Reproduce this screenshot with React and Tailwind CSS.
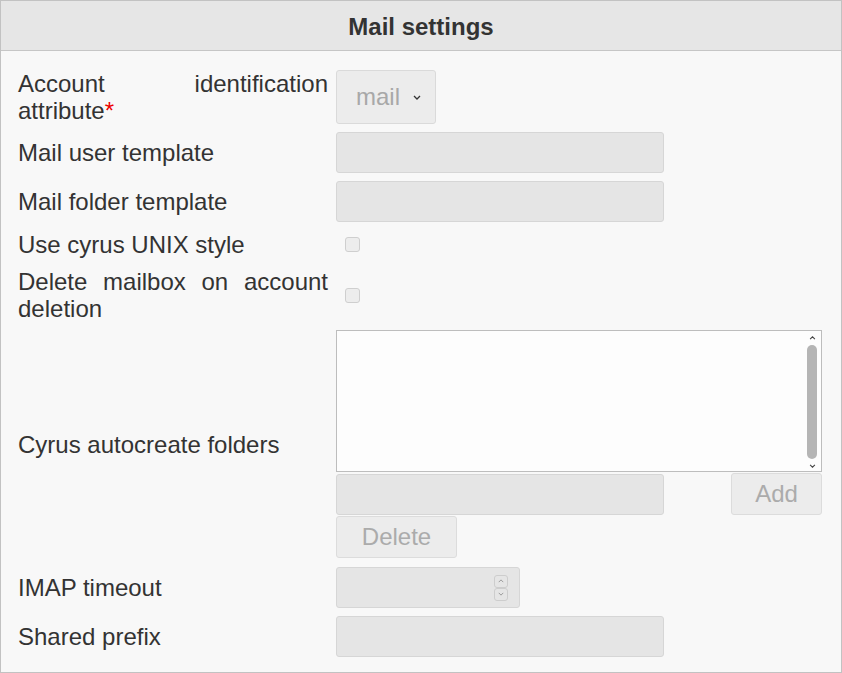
import React from "react";

const font = { fontFamily: '"Liberation Sans", Arial, sans-serif' };

function Label({ children, justify }) {
  return (
    <div
      className={
        "w-[310px] shrink-0 text-[24px] leading-[27px] text-[#333] " +
        (justify ? "text-justify" : "")
      }
    >
      {children}
    </div>
  );
}

function Input({ w = "w-[328px]" }) {
  return (
    <div className={`${w} h-[41px] rounded-[3px] border border-[#d6d6d6] bg-[#e5e5e5]`} />
  );
}

function Checkbox() {
  return (
    <div className="ml-[9px] h-[15px] w-[15px] rounded-[3px] border border-[#cfcfcf] bg-[#ededed]" />
  );
}

function Chevron({ up, className }) {
  return (
    <svg viewBox="0 0 8 5" className={className} fill="none" stroke="currentColor" strokeWidth="1.3">
      {up ? <path d="M1 4 L4 1 L7 4" /> : <path d="M1 1 L4 4 L7 1" />}
    </svg>
  );
}

function Row({ children, className = "" }) {
  return <div className={"flex items-center gap-2 " + className}>{children}</div>;
}

export default function App() {
  return (
    <div style={font} className="w-[842px] h-[673px] border border-[#c2c2c2] bg-[#f8f8f8]">
      <div className="h-[50px] border-b border-[#c6c6c6] bg-[#e6e6e6] flex items-center justify-center">
        <h2 className="text-[24px] leading-[27px] font-bold text-[#333] mt-px">Mail settings</h2>
      </div>
      <div className="pt-[19px] pl-[17px] pr-[18px] flex flex-col gap-2">
        <Row>
          <Label justify>
            Account identification attribute<span className="text-[#e00]">*</span>
          </Label>
          <div className="w-[100px] h-[54px] rounded-[3px] border border-[#dadada] bg-[#ececec] flex items-center pl-[19px] gap-[13px]">
            <span className="text-[24px] text-[#a8a8a8]">mail</span>
            <Chevron className="w-[8px] h-[5px] text-[#333]" />
          </div>
        </Row>
        <Row>
          <Label>Mail user template</Label>
          <Input />
        </Row>
        <Row>
          <Label>Mail folder template</Label>
          <Input />
        </Row>
        <Row className="mt-[1px]">
          <Label>Use cyrus UNIX style</Label>
          <Checkbox />
        </Row>
        <Row className="mt-[2px]">
          <Label justify>Delete mailbox on account deletion</Label>
          <Checkbox />
        </Row>
        <Row>
          <Label>Cyrus autocreate folders</Label>
          <div className="flex flex-col w-[486px]">
            <div className="h-[142px] border border-[#bdbdbd] bg-[#fdfdfd] flex justify-end">
              <div className="w-[18px] flex flex-col items-center pt-[5px] pb-[3px]">
                <Chevron up className="w-[7px] h-[4px] text-[#444]" />
                <div className="mt-[5px] w-[10px] flex-1 rounded-full bg-[#b5b5b5]" />
                <Chevron className="mt-[5px] w-[7px] h-[4px] text-[#444]" />
              </div>
            </div>
            <div className="mt-px flex justify-between items-start">
              <div className="mt-px">
                <Input />
              </div>
              <button className="w-[91px] h-[42px] rounded-[3px] border border-[#dcdcdc] bg-[#ececec] text-[24px] text-[#ababab]">
                Add
              </button>
            </div>
            <button className="mt-px w-[121px] h-[42px] rounded-[3px] border border-[#dcdcdc] bg-[#ececec] text-[24px] text-[#ababab]">
              Delete
            </button>
          </div>
        </Row>
        <Row className="mt-px">
          <Label>IMAP timeout</Label>
          <div className="w-[184px] h-[41px] rounded-[3px] border border-[#d6d6d6] bg-[#e5e5e5] flex justify-end items-center pr-[11px]">
            <div className="flex flex-col">
              <div className="w-[14px] h-[13px] rounded-[3px] border border-[#cdcdcd] flex items-center justify-center">
                <Chevron up className="w-[6px] h-[4px] text-[#999]" />
              </div>
              <div className="w-[14px] h-[13px] rounded-[3px] border border-[#cdcdcd] flex items-center justify-center">
                <Chevron className="w-[6px] h-[4px] text-[#999]" />
              </div>
            </div>
          </div>
        </Row>
        <Row>
          <Label>Shared prefix</Label>
          <Input />
        </Row>
      </div>
    </div>
  );
}
